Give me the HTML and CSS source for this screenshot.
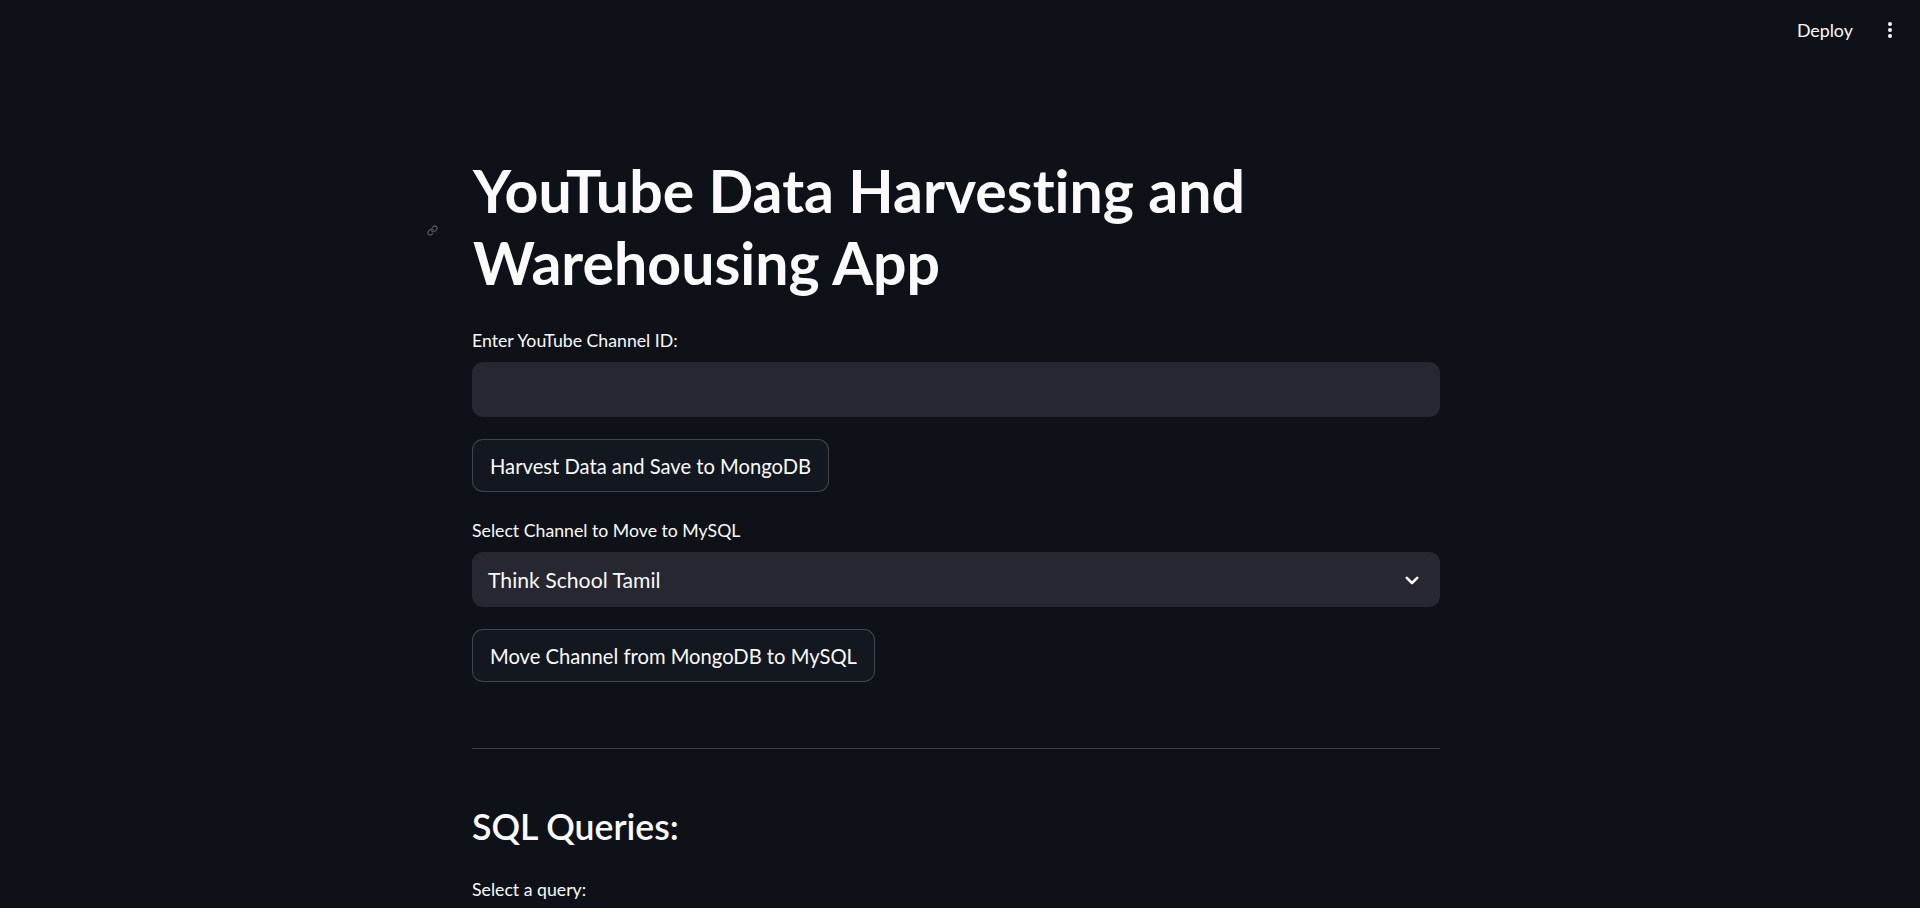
FILE: index.html
```html
<!DOCTYPE html>
<html lang="en">
<head>
<meta charset="utf-8">
<title>YouTube Data Harvesting and Warehousing App</title>
<link rel="stylesheet" href="styles.css">
</head>
<body>
<header class="topbar">
  <span class="deploy">Deploy</span>
  <span class="menu" aria-label="Main menu"><i></i><i></i><i></i></span>
</header>
<div class="page">
  <main class="main">
    <h1 class="title">
      <a class="anchor" aria-hidden="true">
        <svg width="11" height="11" viewBox="0 0 24 24" fill="none" stroke="#5d6068" stroke-width="2.4" stroke-linecap="round" stroke-linejoin="round"><path d="M10 13a5 5 0 0 0 7.54.54l3-3a5 5 0 0 0-7.070-7.07l-1.72 1.71"/><path d="M14 11a5 5 0 0 0-7.54-.54l-3 3a5 5 0 0 0 7.07 7.07l1.71-1.71"/></svg>
      </a>
      YouTube Data Harvesting and Warehousing App
    </h1>

    <div class="widget first">
      <label class="label">Enter YouTube Channel ID:</label>
      <div class="input"></div>
    </div>

    <button class="btn">Harvest Data and Save to MongoDB</button>

    <div class="widget after-btn">
      <label class="label">Select Channel to Move to MySQL</label>
      <div class="select">
        <span>Think School Tamil</span>
        <svg class="chev" width="14" height="9" viewBox="0 0 14 9" fill="none" stroke="#fafafa" stroke-width="2.6" stroke-linecap="round" stroke-linejoin="round"><path d="M1.8 1.8 7 7 12.2 1.8"/></svg>
      </div>
    </div>

    <button class="btn">Move Channel from MongoDB to MySQL</button>

    <hr class="divider">

    <h2 class="subtitle">SQL Queries:</h2>

    <div class="widget query">
      <label class="label">Select a query:</label>
    </div>
  </main>
</div>
</body>
</html>
```
FILE: styles.css
```css
* { box-sizing: border-box; }
html, body { margin: 0; padding: 0; }
body {
  background: #0e1117;
  color: #fafafa;
  font-family: "Lato", "Liberation Sans", sans-serif;
  font-variant-ligatures: none;
  overflow: hidden;
  height: 908px;
}
.topbar {
  height: 59px;
  display: flex;
  align-items: center;
  justify-content: flex-end;
  padding-right: 28px;
}
.deploy {
  font-size: 17.8px;
  line-height: 24px;
  color: #fafafa;
  margin-right: 35px;
}
.menu {
  display: flex;
  flex-direction: column;
  gap: 1.8px;
  width: 4.2px;
  margin-top: 1px;
}
.menu i {
  display: block;
  width: 4.2px;
  height: 4.2px;
  border-radius: 50%;
  background: #fafafa;
}
.page {
  display: flex;
  justify-content: center;
  padding-right: 8px;
}
.main {
  width: 968px;
  display: flex;
  flex-direction: column;
  align-items: flex-start;
}
.title {
  position: relative;
  margin: 96px 0 0 0;
  font-size: 59px;
  line-height: 72px;
  font-weight: 700;
  width: 820px;
  padding-left: 1px;
}
.anchor {
  position: absolute;
  left: -45px;
  top: 59px;
  display: block;
  line-height: 0;
}
.widget { width: 100%; display: flex; flex-direction: column; }
.widget.first { margin-top: 28px; }
.widget.after-btn { margin-top: 25px; }
.label {
  font-size: 17.7px;
  line-height: 27px;
  margin-bottom: 8px;
  color: #fafafa;
}
.input {
  height: 55px;
  background: #262730;
  border-radius: 11px;
  width: 100%;
}
.select {
  height: 55px;
  background: #262730;
  border-radius: 11px;
  width: 100%;
  display: flex;
  align-items: center;
  justify-content: space-between;
  padding: 0 21px 0 16px;
  font-size: 21.2px;
}
.chev { display: block; margin-top: 1px; }
.btn {
  margin-top: 22px;
  height: 53px;
  padding: 0 17px;
  background: #131720;
  border: 1px solid rgba(250, 250, 250, 0.2);
  border-radius: 11px;
  color: #fafafa;
  font-family: inherit;
  font-variant-ligatures: none;
  font-size: 20.2px;
  line-height: 24px;
  display: flex;
  align-items: center;
}
.divider {
  width: 100%;
  margin: 66px 0 0 0;
  border: none;
  border-top: 1px solid rgba(250, 250, 250, 0.2);
  height: 0;
}
.subtitle {
  margin: 53px 0 0 0;
  font-size: 35.6px;
  line-height: 49px;
  font-weight: 600;
}
.widget.query { margin-top: 25px; }
```
